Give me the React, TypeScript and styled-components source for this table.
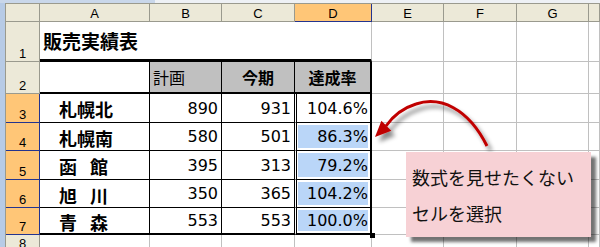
import styled, { createGlobalStyle } from 'styled-components';

const Global = createGlobalStyle`
  html, body { margin: 0; padding: 0; background: #fff; }
  body { font-family: "Liberation Sans", Arial, sans-serif; }
`;

const COLS = [34, 110, 72, 73, 77, 72, 73, 72];
const ROWS = [18, 40, 32, 29, 28, 29, 28, 27, 17];
const LETTERS = ['A', 'B', 'C', 'D', 'E', 'F', 'G', ''];

const JP = '"Noto Sans CJK JP", "Noto Sans", sans-serif';
const NUM = '"DejaVu Sans", "Liberation Sans", sans-serif';
const BLACK = '1px solid #000';
const THICK = '2px solid #000';

const data = [
  { name: '札幌北', plan: 890, actual: 931, rate: '104.6%' },
  { name: '札幌南', plan: 580, actual: 501, rate: '86.3%' },
  { name: '函 館', plan: 395, actual: 313, rate: '79.2%' },
  { name: '旭 川', plan: 350, actual: 365, rate: '104.2%' },
  { name: '青 森', plan: 553, actual: 553, rate: '100.0%' },
];

const Frame = styled.div`
  position: relative;
  width: 600px;
  height: 247px;
  overflow: hidden;
  background: #fff;
`;

const TopStrip = styled.div`
  height: 3px;
  background: linear-gradient(to right, #c9d7ea 0, #c9d7ea 155px, #eef1f5 155px);
`;

const Body = styled.div`
  display: flex;
`;

const SideStrip = styled.div`
  width: 5px;
  flex: none;
  background: #b7cbe6;
`;

const Sheet = styled.div`
  flex: 1;
  display: grid;
  grid-template-columns: ${COLS.map((c) => c + 'px').join(' ')} 1fr;
  grid-template-rows: ${ROWS.map((r) => r + 'px').join(' ')};
  border-left: 1px solid #9a9a8e;
  border-top: 1px solid #9a9a8e;
`;

const HeadCell = styled.div<{ $on?: boolean }>`
  box-sizing: border-box;
  display: flex;
  justify-content: center;
  background: ${(p) => (p.$on ? '#ffc677' : '#ece9d8')};
  border-right: 1px solid ${(p) => (p.$on ? '#23348f' : '#9a9a8e')};
  border-bottom: 1px solid ${(p) => (p.$on ? '#23348f' : '#9a9a8e')};
  font-size: 13px;
  line-height: 1;
  color: #000;
  overflow: hidden;
`;

const ColHead = styled(HeadCell)`
  align-items: center;
  padding-top: 2px;
`;

const RowHead = styled(HeadCell)`
  align-items: flex-end;
  padding-bottom: 1px;
`;

const Cell = styled.div<{ $r?: string; $b?: string; $bg?: string }>`
  box-sizing: border-box;
  display: flex;
  align-items: center;
  min-width: 0;
  white-space: nowrap;
  background: ${(p) => p.$bg || '#fff'};
  border-right: ${(p) => p.$r || '1px solid #c0c0c0'};
  border-bottom: ${(p) => p.$b || '1px solid #c0c0c0'};
  color: #000;
`;

const TitleCell = styled(Cell)`
  padding-left: 3px;
  font-family: ${JP};
  font-size: 19px;
  font-weight: 700;
  line-height: 1;
`;

const LabelCell = styled(Cell)<{ $bold?: boolean; $center?: boolean }>`
  justify-content: ${(p) => (p.$center ? 'center' : 'flex-start')};
  padding-left: ${(p) => (p.$center ? 0 : 3)}px;
  font-family: ${JP};
  font-size: 16px;
  font-weight: ${(p) => (p.$bold ? 700 : 400)};
  line-height: 1;
`;

const NameCell = styled(Cell)`
  padding: 2px 0 0 19px;
  font-family: ${JP};
  font-size: 18px;
  font-weight: 700;
  line-height: 1;
  word-spacing: 9px;
`;

const NumCell = styled(Cell)`
  justify-content: flex-end;
  padding: 1px 3px 0 0;
  font-family: ${NUM};
  font-size: 16px;
  line-height: 1;
`;

const RateCell = styled(NumCell)<{ $active?: boolean }>`
  position: relative;
  padding-right: 2px;
  background: ${(p) => (p.$active ? '#fff' : '#bad6f8')};
  border-left: 1px solid #fff;
  border-right: 2px solid #000;
  box-shadow: inset 1px 0 0 #000, inset 0 0 0 2px #fff;
`;

const Handle = styled.span`
  position: absolute;
  right: -5px;
  bottom: -5px;
  width: 5px;
  height: 5px;
  background: #000;
  z-index: 2;
`;

const ArrowLayer = styled.svg`
  position: absolute;
  left: 0;
  top: 0;
  pointer-events: none;
`;

const Callout = styled.div`
  position: absolute;
  left: 406px;
  top: 152px;
  width: 185px;
  height: 85px;
  box-sizing: border-box;
  padding: 7px 0 0 6px;
  background: #f7d1d5;
  box-shadow: 5px 5px 3px rgba(0, 0, 0, 0.55);
  font-family: ${JP};
  font-size: 18px;
  line-height: 36px;
  color: #111;
  white-space: nowrap;
`;

function Blanks({ from, row, b }: { from: number; row: number; b?: string }) {
  return (
    <>
      {LETTERS.slice(from).map((l) => (
        <Cell key={row + l} $b={b} />
      ))}
    </>
  );
}

export default function App() {
  return (
    <Frame>
      <Global />
      <TopStrip />
      <Body>
        <SideStrip />
        <Sheet>
          <ColHead />
          {LETTERS.map((l, i) => (
            <ColHead key={i} $on={l === 'D'}>
              {l}
            </ColHead>
          ))}

          <RowHead>1</RowHead>
          <TitleCell $r="none" $b="3px solid #000">販売実績表</TitleCell>
          <Cell $r="none" $b="3px solid #000" />
          <Cell $r="none" $b="3px solid #000" />
          <Cell $b="3px solid #000" />
          <Blanks from={4} row={1} />

          <RowHead>2</RowHead>
          <Cell $r={BLACK} $b={THICK} />
          <LabelCell $bg="#c0c0c0" $r={BLACK} $b={THICK}>計画</LabelCell>
          <LabelCell $bg="#c0c0c0" $r={BLACK} $b={THICK} $bold $center>今期</LabelCell>
          <LabelCell $bg="#c0c0c0" $r={THICK} $b={THICK} $bold $center>達成率</LabelCell>
          <Blanks from={4} row={2} />

          {data.map((d, i) => {
            const last = i === data.length - 1;
            const b = last ? THICK : BLACK;
            return [
              <RowHead key={'h' + i} $on>{i + 3}</RowHead>,
              <NameCell key={'a' + i} $r={BLACK} $b={b}>{d.name}</NameCell>,
              <NumCell key={'b' + i} $r={BLACK} $b={b}>{d.plan}</NumCell>,
              <NumCell key={'c' + i} $r={BLACK} $b={b}>{d.actual}</NumCell>,
              <RateCell key={'d' + i} $b={b} $active={i === 0}>
                {d.rate}
                {last && <Handle />}
              </RateCell>,
              <Blanks key={'e' + i} from={4} row={i + 3} />,
            ];
          })}

          <RowHead>8</RowHead>
          <Blanks from={0} row={8} />
        </Sheet>
      </Body>

      <ArrowLayer width="600" height="247" viewBox="0 0 600 247">
        <defs>
          <filter id="shade" x="-20%" y="-20%" width="140%" height="160%">
            <feDropShadow dx="4" dy="5" stdDeviation="2" floodColor="#000" floodOpacity="0.45" />
          </filter>
        </defs>
        <g filter="url(#shade)">
          <path
            d="M487 146 C468 108 440 96 416 104 C403 108 393 116 386 126"
            fill="none"
            stroke="#c00000"
            strokeWidth="3"
          />
          <polygon points="375,137 381.4,120.7 391.3,130.7" fill="#c00000" />
        </g>
      </ArrowLayer>

      <Callout>
        数式を見せたくない
        <br />
        セルを選択
      </Callout>
    </Frame>
  );
}
